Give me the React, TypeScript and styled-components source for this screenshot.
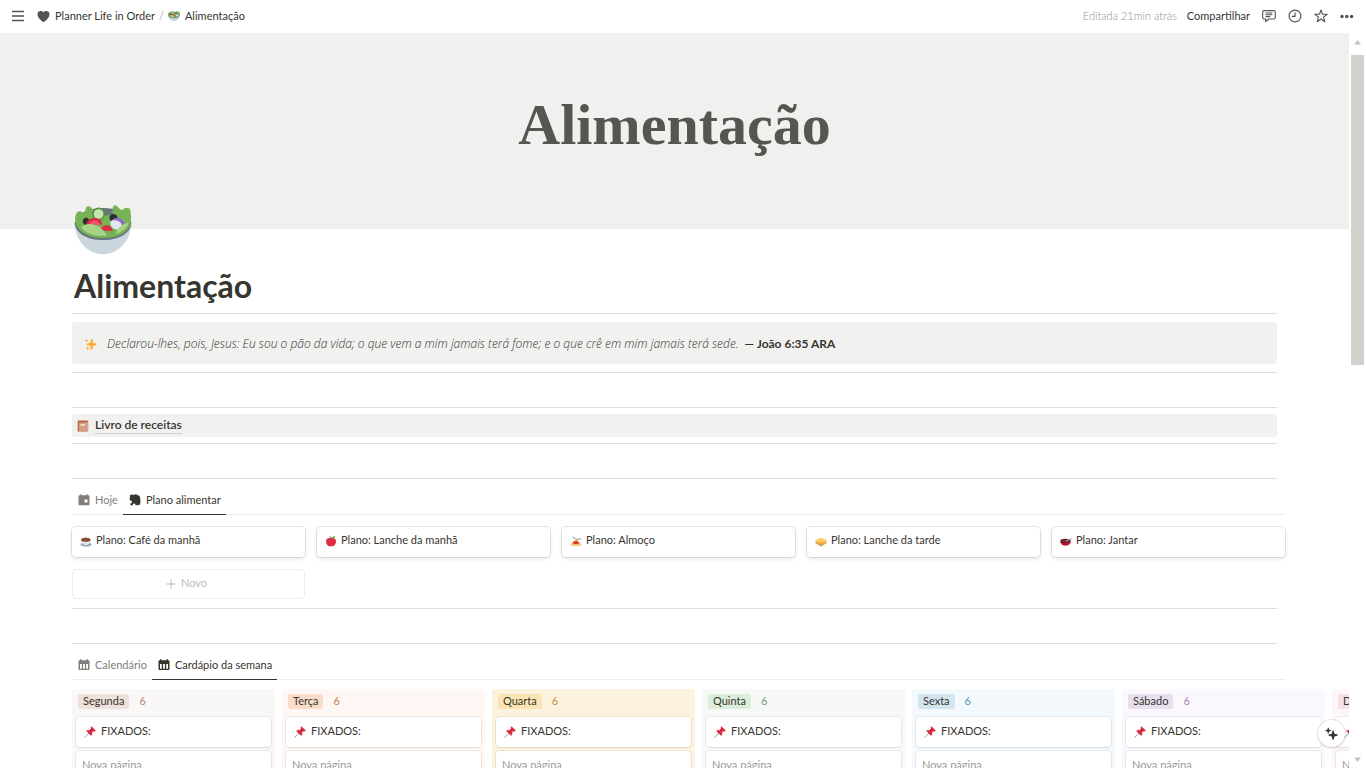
import React, { ReactNode } from "react";
import styled, { createGlobalStyle } from "styled-components";

const GlobalStyle = createGlobalStyle`
  *, *::before, *::after { box-sizing: border-box; }
  body {
    margin: 0;
    background: #fff;
    color: #37352f;
    font-family: Lato, "Liberation Sans", sans-serif;
    font-size: 11px;
    line-height: 16px;
  }
  a { color: inherit; text-decoration: none; }
  button { font: inherit; color: inherit; background: none; border: 0; padding: 0; cursor: pointer; }
  svg { display: block; flex: none; }
`;

const Shell = styled.div`
  display: flex;
  flex-direction: column;
  height: 100vh;
  overflow: hidden;
`;

const TopBar = styled.header`
  display: flex;
  align-items: center;
  justify-content: space-between;
  flex: none;
  height: 33px;
  padding: 0 12px 1px;
`;

const Breadcrumbs = styled.nav`
  display: flex;
  align-items: center;
  gap: 4px;
`;

const IconButton = styled.button`
  display: flex;
  align-items: center;
  justify-content: center;
`;

const MenuButton = styled(IconButton)`
  margin-right: 9px;
`;

const Crumb = styled.a`
  display: flex;
  align-items: center;
  gap: 5px;
`;

const Slash = styled.span`
  color: #b4b3b0;
`;

const TopActions = styled.div`
  display: flex;
  align-items: center;
  gap: 12px;
`;

const ShareGroup = styled.div`
  display: flex;
  gap: 10px;
`;

const Edited = styled.span`
  color: #8f8e8a;
  font-weight: 300;
`;

const Viewport = styled.div`
  display: flex;
  flex: 1;
  min-height: 0;
`;

const Page = styled.main`
  flex: 1;
  min-width: 0;
  overflow: hidden;
`;

const Scrollbar = styled.div`
  display: flex;
  flex-direction: column;
  align-items: center;
  justify-content: space-between;
  width: 17px;
  padding: 7px 2px 6px;
`;

const Thumb = styled.div`
  width: 13px;
  height: 43%;
  margin: 10px 0 auto;
  background: #d3d1cb;
`;

const Cover = styled.div`
  display: flex;
  align-items: center;
  justify-content: center;
  height: 196px;
  padding-bottom: 12px;
  background: #f0f0ee;
  color: #555552;
  font: bold 58px/64px "Liberation Serif", serif;
`;

const Body = styled.div`
  padding: 0 72px;
`;

const PageIcon = styled.div`
  position: relative;
  height: 58px;
  margin-top: -29px;
  padding-left: 2px;
`;

const Title = styled.h1`
  margin: 8px 0 7px;
  padding-left: 2px;
  font-size: 32px;
  line-height: 40px;
  font-weight: 700;
`;

const Divider = styled.hr`
  height: 1px;
  margin: 0;
  border: 0;
  background: #dededc;
`;

const Spacer = styled.div`
  height: 34px;
`;

const Callout = styled.p`
  display: flex;
  align-items: center;
  gap: 10px;
  height: 42px;
  margin: 8px 0;
  padding: 2px 12px 0;
  border-radius: 3px;
  background: #f1f1ef;
  font-size: 12px;
`;

const Verse = styled.em`
  font-family: "Open Sans", sans-serif;
  font-weight: 300;
`;

const Reference = styled.strong`
  margin-left: 6px;
`;

const LinkBlock = styled.div`
  display: flex;
  align-items: center;
  gap: 6px;
  height: 23px;
  margin: 6px 0;
  padding: 0 5px;
  border-radius: 3px;
  background: #f1f1ef;
  font-size: 12px;
  font-weight: 600;
`;

const PageLink = styled.a`
  border-bottom: 1px solid #d0cfcc;
`;

const Database = styled.section`
  margin-right: -8px;
`;

const TabList = styled.div`
  display: flex;
  height: 36px;
  padding-top: 7px;
  border-bottom: 1px solid #ededec;
`;

const TabButton = styled.button<{ $active?: boolean }>`
  display: flex;
  align-items: center;
  gap: 5px;
  height: 29px;
  padding: 0 5px 0 6px;
  color: ${(p) => (p.$active ? "#37352f" : "#807f7b")};
  border-bottom: 1px solid ${(p) => (p.$active ? "#37352f" : "transparent")};
`;

const TabLabel = styled.span`
  padding-bottom: 1px;
`;

const Gallery = styled.div`
  display: grid;
  grid-template-columns: repeat(5, 1fr);
  gap: 12px;
  padding: 12px 0 9px;
`;

const Card = styled.a`
  display: flex;
  align-items: center;
  gap: 4px;
  height: 30px;
  padding: 0 8px 2px;
  border-radius: 4px;
  background: #fff;
  box-shadow: 0 0 0 1px rgba(15, 15, 15, 0.1), 0 2px 4px rgba(15, 15, 15, 0.1);
`;

const CardLabel = styled.span`
  padding-bottom: 2px;
`;

const NewCard = styled.button`
  display: flex;
  align-items: center;
  justify-content: center;
  gap: 5px;
  height: 30px;
  border: 1px solid #eeeeed;
  border-radius: 4px;
  color: #bdbcb9;
  padding-right: 4px;
`;

const Board = styled.div`
  display: flex;
  gap: 7px;
  padding-top: 9px;
  margin-right: -64px;
  overflow: hidden;
`;

const Column = styled.section<{ $bg: string }>`
  display: flex;
  flex-direction: column;
  flex: none;
  gap: 4px;
  width: 203px;
  padding: 5px 4px;
  border-radius: 4px;
  background: ${(p) => p.$bg};
`;

const ColumnHead = styled.header<{ $ink: string }>`
  display: flex;
  gap: 10px;
  height: 19px;
  padding: 0 2px;
  color: ${(p) => p.$ink};
`;

const Tag = styled.h2<{ $bg: string }>`
  height: 15px;
  margin: 0;
  padding: 0 5px;
  border-radius: 2px;
  background: ${(p) => p.$bg};
  color: #37352f;
  font-size: 11px;
  line-height: 14px;
  font-weight: 400;
`;

const Count = styled.span`
  line-height: 14px;
`;

const BoardCard = styled.a<{ $muted?: boolean }>`
  display: flex;
  align-items: center;
  gap: 5px;
  height: 30px;
  padding: ${(p) => (p.$muted ? "0 6px" : "0 8px")};
  border-radius: 4px;
  background: #fff;
  color: ${(p) => (p.$muted ? "#9b9a97" : "#37352f")};
  box-shadow: 0 0 0 1px rgba(15, 15, 15, 0.06), 0 1px 2px rgba(15, 15, 15, 0.06);
`;

const AiButton = styled.button`
  position: fixed;
  right: 21px;
  bottom: 21px;
  display: flex;
  align-items: center;
  justify-content: center;
  width: 27px;
  height: 27px;
  border-radius: 50%;
  background: #fff;
  box-shadow: 0 0 0 1px rgba(15, 15, 15, 0.08), 0 1px 3px rgba(15, 15, 15, 0.15);
`;

const Salad = ({ size }: { size: number }) => (
  <svg width={size} height={size} viewBox="0 0 36 36" aria-hidden="true">
    <ellipse cx="18" cy="13" rx="16.500" ry="8" fill="#66757f" />
    <path d="M.3 14C.7 25 8 33.600 18 33.600S35.300 25 35.700 14z" fill="#ccd6dd" />
    <path d="M.4 13.500C.4 20.500 8 24.900 18 24.900s17.600-4.400 17.600-11.400z" fill="#66757f" />
    <path d="M.8 13C.3 9 2.200 6 4.200 7.200 5 8 6 8 7 7.500 7 4 8.500 3 10.500 4.500l2 2.500h12C23.500 5 24 3.300 25.500 3.200c2 .4 2.500 2.600 4.500 3 1.500-1.600 4.500-2.200 5 .3.500 2 .8 6.500-.3 9.500C32.500 21 26 23.600 18 23.600S1.800 20 .8 13z" fill="#77b255" />
    <path d="M13 7h10l2 2-8 1z" fill="#66757f" />
    <path d="M5.400 13.200c0-3 4.200-3 4.200 0s-4.200 3-4.200 0zM22 11c0-3 5-3 5 0s-5 3-5 0z" fill="#292f33" />
    <circle cx="15.300" cy="8.700" r="4" fill="#5c913b" />
    <circle cx="15.300" cy="8.700" r="3" fill="#c6e5b3" />
    <path d="M7.500 16C8 9.500 17.500 10 17.500 15.200z" fill="#dd2e44" />
    <path d="M9.500 16c1-4.500 6-4 6.500-.5z" fill="#ea596e" />
    <path d="M16 19c2-5 7.500-4 8 .3z" fill="#dd2e44" />
    <path d="M22.500 14c3-5 9-1.500 8 2.500l-3 2c-3 0-5-2-5-4.500z" fill="#e1e8ed" />
    <path d="M24 12.500c3-3.500 8-.5 7.300 3.500l-1.400.6c-.3-3-2.400-4.200-5.900-4.100z" fill="#9266cc" />
    <path d="M4.500 17c4-4 12-2 16 5-6 1-13-1-16-5zM26 21c1-4 4-6 8-7-.5 3-4 6-8 7z" fill="#a6d388" />
  </svg>
);

const Heart = () => (
  <svg width="13" height="13" viewBox="0 0 13 13" aria-hidden="true">
    <path d="M6.500 12.300C3 10 .5 7.500.5 4.300.5.700 4.700 0 6.500 2.500 8.300 0 12.500.7 12.500 4.300c0 3.200-2.500 5.700-6 8z" fill="#55534e" />
  </svg>
);

const Sparkles = () => (
  <svg width="13" height="13" viewBox="0 0 13 13" fill="#ffac33" aria-hidden="true">
    <path d="M7 1h1.400l.8 3.900 3.300.7v1.300l-3.300.8-.8 3.800H7l-.8-3.800-3.400-.8V5.600l3.400-.7z" />
    <path d="M2.500.6 3 2l1.500.5L3 3l-.5 1.500L2 3 .6 2.500 2 2zM3.600 8.200l.6 1.600 1.600.6-1.600.5-.6 1.600-.5-1.600-1.600-.5 1.600-.6z" />
  </svg>
);

const Book = () => (
  <svg width="12" height="12" viewBox="0 0 12 12" aria-hidden="true">
    <path d="M1.500.5h9.700v9.700l-1 1.300H.7V1.500z" fill="#b5654b" />
    <path d="M9.500 2.200h1.200v8l-1.200.8z" fill="#ccd6dd" />
    <path d="M2 2.500h7.400V11H2z" fill="#d99e82" />
    <path d="M3.500 4.200h4.500v1.500H3.500z" fill="#f4e3da" />
  </svg>
);

const Coffee = () => (
  <svg width="12" height="12" viewBox="0 0 12 12" aria-hidden="true">
    <ellipse cx="6" cy="9.500" rx="5.600" ry="2" fill="#99aab5" />
    <path d="M1 4.500h9.500c0 3-1.500 5.500-4.700 5.500S1 7.500 1 4.500z" fill="#e1e8ed" />
    <ellipse cx="5.800" cy="4.700" rx="4.800" ry="2" fill="#8a4b38" />
    <path d="M4 4.500 6 2l1.500 2.500z" fill="#8a4b38" />
  </svg>
);

const Apple = () => (
  <svg width="12" height="12" viewBox="0 0 12 12" aria-hidden="true">
    <path d="M6 3.500C3.500 2 1 3.500 1 6.200 1 9 3 11.800 6 11.300c3 .5 5-2.300 5-5.100C11 3.500 8.500 2 6 3.500z" fill="#dd2e44" />
    <path d="M6 4C6 2.500 5.500 2 5 1.500" stroke="#662113" fill="none" />
    <path d="M6.500 3C7 1.500 9 1 10.500 1.500 10 3 8 3.500 6.500 3z" fill="#77b255" />
  </svg>
);

const Pasta = () => (
  <svg width="12" height="12" viewBox="0 0 12 12" aria-hidden="true">
    <ellipse cx="6" cy="9.300" rx="5.700" ry="2" fill="#ccd6dd" />
    <path d="M1.500 9.500C2 6.500 4 5 6 5s4 1.500 4.500 4.500c-2 1.300-7 1.300-9 0z" fill="#ffcc4d" />
    <path d="M2.700 8c1-2.500 5.600-2.500 6.600 0-1.500 1.500-5.100 1.500-6.600 0z" fill="#dd2e44" />
    <path d="M2.500 2 7 5M6 5l5-1.500" stroke="#8899a6" fill="none" />
  </svg>
);

const Sandwich = () => (
  <svg width="12" height="12" viewBox="0 0 12 12" aria-hidden="true">
    <path d="M.5 6.500 6 10l5.500-3.500v1.700L6 11.500.5 8.200z" fill="#d99e45" />
    <path d="M.5 6.500h11L6 10.300z" fill="#77b255" />
    <path d="M.3 5.500C1.500 4 4 3 6 3s4.500 1 5.700 2.500C11 7.500 8 9 6 9S1 7.500.3 5.500z" fill="#ffcc6b" />
    <path d="M.3 5.800c2 2 9.400 2 11.400 0-.7 2-3.700 3.700-5.700 3.700S1 7.800.3 5.800z" fill="#f4a83a" />
  </svg>
);

const Pot = () => (
  <svg width="12" height="12" viewBox="0 0 12 12" aria-hidden="true">
    <path d="M.3 6h10.400c0 3-2.200 4.700-5.200 4.700S.3 9 .3 6z" fill="#be1931" />
    <ellipse cx="5.500" cy="6" rx="5.200" ry="2.200" fill="#a0041e" />
    <ellipse cx="5.500" cy="6" rx="4.100" ry="1.500" fill="#4b3a35" />
    <path d="m6 6.200 5.500-2.700" stroke="#99aab5" strokeWidth="1.200" />
  </svg>
);

const Pin = () => (
  <svg width="12" height="12" viewBox="0 0 12 12" aria-hidden="true">
    <path d="M.3 11.700 5 7.200" stroke="#99aab5" />
    <path d="M7.500.7 11.500 4.500 10.300 5.300 9.300 5 7.800 6.700c.4 1.200.2 2-.6 2.800L2.500 4.900c1-.8 1.900-.9 2.900-.5L7.100 2.700 6.900 1.600z" fill="#dd2e44" stroke="#dd2e44" strokeWidth=".6" />
    <path d="m6.200 5 2.200-2.300M3.500 5.400l3.200 3" stroke="#a0041e" strokeWidth=".6" />
  </svg>
);

const TodayIcon = () => (
  <svg width="12" height="12" viewBox="0 0 12 12" fill="currentColor" aria-hidden="true">
    <path fillRule="evenodd" d="M2.200.3h1.300v1h5v-1h1.300v1h.7q1 0 1 1v8q0 1-1 1h-9q-1 0-1-1v-8q0-1 1-1h.7zM6.500 5.500v3h3v-3z" />
  </svg>
);

const MeatIcon = () => (
  <svg width="12" height="12" viewBox="0 0 12 12" fill="currentColor" aria-hidden="true">
    <path d="M2.200.6C3.500.2 4 1.200 5 .8 6.400.2 7.500 0 8.300.9c.5.600 1.500.2 2.200 1 .8.900.3 2 .8 3 .4 1-.2 1.800.1 2.600.5 1-.2 1.800-.4 1.900.2 1-.9 2-2 1.700-.8-.3-1.200.4-2 .1-.9-.3-.8-1.300-1.500-1.600-.6-.3-1.200.3-1.700.8.1.9-.8 1.500-1.500 1-.2-.3-.5-.5-.8-.6-.9-.7-.2-1.800.8-1.600.5-.6 1-1.300.5-2C2.200 6.500.8 6.400.6 5.200.5 4.300 1.200 3.900.9 3 .6 1.900 1.200.9 2.200.6z" />
  </svg>
);

const CalendarIcon = () => (
  <svg width="12" height="12" viewBox="0 0 12 12" fill="currentColor" aria-hidden="true">
    <path fillRule="evenodd" d="M2 .3h1.500v1h5v-1H10v1h.5q1 0 1 1V10q0 1-1 1h-9q-1 0-1-1V2.300q0-1 1-1H2zM2 5v4.700h1.800V5zm3.100 0v4.700h1.800V5zm3.100 0v4.700H10V5z" />
  </svg>
);

interface Plan { icon: ReactNode; name: string }
const plans: Plan[] = [
  { icon: <Coffee />, name: "Café da manhã" },
  { icon: <Apple />, name: "Lanche da manhã" },
  { icon: <Pasta />, name: "Almoço" },
  { icon: <Sandwich />, name: "Lanche da tarde" },
  { icon: <Pot />, name: "Jantar" },
];

interface Day { name: string; bg: string; tag: string; ink: string }
const days: Day[] = [
  { name: "Segunda", bg: "#faf8f7", tag: "#eee0da", ink: "#bb8571" },
  { name: "Terça", bg: "#fef7f4", tag: "#fadec9", ink: "#cb7b46" },
  { name: "Quarta", bg: "#fbf3de", tag: "#fbe4b4", ink: "#c29343" },
  { name: "Quinta", bg: "#f7f9f7", tag: "#dbeddb", ink: "#6c9b7d" },
  { name: "Sexta", bg: "#f3f9fc", tag: "#d3e5ef", ink: "#5b97bd" },
  { name: "Sábado", bg: "#fbf8fd", tag: "#e8deee", ink: "#a782c3" },
  { name: "Domingo", bg: "#fdf6f8", tag: "#f5e0e9", ink: "#cd749f" },
];

export default function App() {
  return (
    <Shell>
      <GlobalStyle />
      <TopBar>
        <Breadcrumbs aria-label="Navegação">
          <MenuButton aria-label="Menu">
            <svg width="12" height="12" viewBox="0 0 12 12" stroke="#55534e" strokeWidth="1.300" aria-hidden="true">
              <path d="M0 1.500h12M0 6h12M0 10.500h12" />
            </svg>
          </MenuButton>
          <Crumb href="#"><Heart />Planner Life in Order</Crumb>
          <Slash>/</Slash>
          <Crumb href="#"><Salad size={12} />Alimentação</Crumb>
        </Breadcrumbs>
        <TopActions>
          <ShareGroup>
            <Edited>Editada 21min atrás</Edited>
            <button>Compartilhar</button>
          </ShareGroup>
          <IconButton aria-label="Comentários">
            <svg width="14" height="14" viewBox="0 0 14 14" fill="none" stroke="#55534e" strokeWidth="1.100" strokeLinejoin="round" aria-hidden="true">
              <path d="M2.200 1.600h9.600q1.500 0 1.500 1.500v5.400q0 1.500-1.500 1.500H6.700l-3 2.700V10H2.200Q.7 10 .7 8.500V3.100q0-1.500 1.500-1.500zM3.600 4h6.800M3.600 5.800h6.800M3.600 7.600h4.600" />
            </svg>
          </IconButton>
          <IconButton aria-label="Atualizações">
            <svg width="14" height="14" viewBox="0 0 14 14" fill="none" stroke="#55534e" strokeWidth="1.200" aria-hidden="true">
              <circle cx="7" cy="7" r="5.900" />
              <path d="M7 3.500V7.300H3.800" />
            </svg>
          </IconButton>
          <IconButton aria-label="Favoritar">
            <svg width="14" height="14" viewBox="0 0 14 14" fill="none" stroke="#55534e" strokeWidth="1.100" strokeLinejoin="round" aria-hidden="true">
              <path d="m7 .9 1.500 4.300 4.700.1-3.700 2.800 1.300 4.600L7 10l-3.800 2.700 1.300-4.600L.8 5.300l4.700-.1z" />
            </svg>
          </IconButton>
          <IconButton aria-label="Mais opções">
            <svg width="14" height="14" viewBox="0 0 14 14" fill="#55534e" aria-hidden="true">
              <circle cx="2" cy="7.500" r="1.700" /><circle cx="6.800" cy="7.500" r="1.700" /><circle cx="11.600" cy="7.500" r="1.700" />
            </svg>
          </IconButton>
        </TopActions>
      </TopBar>
      <Viewport>
        <Page>
          <Cover>Alimentação</Cover>
          <Body>
            <PageIcon><Salad size={58} /></PageIcon>
            <Title>Alimentação</Title>
            <Divider />
            <Callout>
              <Sparkles />
              <span>
                <Verse>Declarou-lhes, pois, Jesus: Eu sou o pão da vida; o que vem a mim jamais terá fome; e o que crê em mim jamais terá sede.</Verse>
                <Reference>— João 6:35 ARA</Reference>
              </span>
            </Callout>
            <Divider />
            <Spacer />
            <Divider />
            <LinkBlock><Book /><PageLink href="#">Livro de receitas</PageLink></LinkBlock>
            <Divider />
            <Spacer />
            <Divider />
            <Database>
              <TabList role="tablist">
                <TabButton role="tab" aria-selected="false"><TodayIcon /><TabLabel>Hoje</TabLabel></TabButton>
                <TabButton role="tab" aria-selected="true" $active><MeatIcon /><TabLabel>Plano alimentar</TabLabel></TabButton>
              </TabList>
              <Gallery>
                {plans.map((plan) => (
                  <Card href="#" key={plan.name}>{plan.icon}<CardLabel>Plano: {plan.name}</CardLabel></Card>
                ))}
                <NewCard>
                  <svg width="10" height="10" viewBox="0 0 10 10" stroke="currentColor" aria-hidden="true"><path d="M5 .5v9M.5 5h9" /></svg>
                  <CardLabel>Novo</CardLabel>
                </NewCard>
              </Gallery>
            </Database>
            <Divider />
            <Spacer />
            <Divider />
            <Database>
              <TabList role="tablist">
                <TabButton role="tab" aria-selected="false"><CalendarIcon /><TabLabel>Calendário</TabLabel></TabButton>
                <TabButton role="tab" aria-selected="true" $active><CalendarIcon /><TabLabel>Cardápio da semana</TabLabel></TabButton>
              </TabList>
              <Board>
                {days.map((day) => (
                  <Column key={day.name} $bg={day.bg}>
                    <ColumnHead $ink={day.ink}><Tag $bg={day.tag}>{day.name}</Tag><Count>6</Count></ColumnHead>
                    <BoardCard href="#"><Pin /><CardLabel>FIXADOS:</CardLabel></BoardCard>
                    <BoardCard href="#" $muted><CardLabel>Nova página</CardLabel></BoardCard>
                  </Column>
                ))}
              </Board>
            </Database>
          </Body>
        </Page>
        <Scrollbar aria-hidden="true">
          <svg width="7" height="5" viewBox="0 0 7 5" fill="#c4c3bf"><path d="M0 4.500 3.500 0 7 4.500z" /></svg>
          <Thumb />
          <svg width="7" height="5" viewBox="0 0 7 5" fill="#c4c3bf"><path d="M0 .5h7L3.500 5z" /></svg>
        </Scrollbar>
      </Viewport>
      <AiButton aria-label="Assistente">
        <svg width="13" height="13" viewBox="0 0 13 13" fill="#37352f" aria-hidden="true">
          <path d="M7.600 3.500h1l.9 3.200 3.200.9v1l-3.200.9-.9 3.200h-1l-.9-3.200-3.200-.9v-1l3.200-.9zM2.900.8h.7l.6 1.900 1.900.6V4l-1.900.6-.6 1.900h-.7l-.6-1.900L.5 4v-.7l1.800-.6z" />
        </svg>
      </AiButton>
    </Shell>
  );
}
